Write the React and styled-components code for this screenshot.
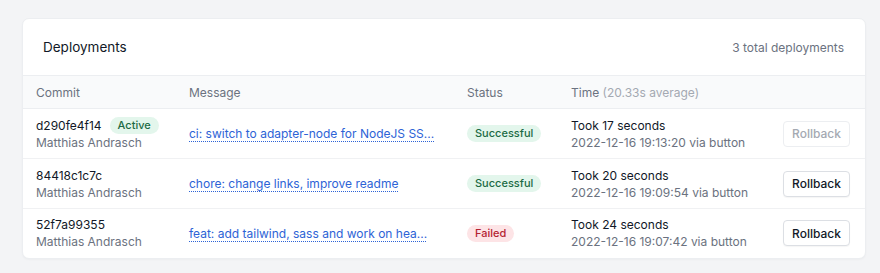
import styled, { createGlobalStyle } from 'styled-components';

const GlobalStyle = createGlobalStyle`
  html, body {
    margin: 0;
    padding: 0;
    background: #f3f4f6;
    font-family: Inter, "Noto Sans", sans-serif;
    -webkit-font-smoothing: antialiased;
  }
`;

const deployments = [
  {
    commit: 'd290fe4f14',
    author: 'Matthias Andrasch',
    active: true,
    message: 'ci: switch to adapter-node for NodeJS SS...',
    status: 'success',
    took: 17,
    date: '2022-12-16 19:13:20',
  },
  {
    commit: '84418c1c7c',
    author: 'Matthias Andrasch',
    message: 'chore: change links, improve readme',
    status: 'success',
    took: 20,
    date: '2022-12-16 19:09:54',
  },
  {
    commit: '52f7a99355',
    author: 'Matthias Andrasch',
    message: 'feat: add tailwind, sass and work on hea...',
    status: 'failed',
    took: 24,
    date: '2022-12-16 19:07:42',
  },
];

export default function App() {
  return (
    <>
      <GlobalStyle />
      <Page>
        <Card>
          <CardHeader>
            <Title>Deployments</Title>
            <Total>3 total deployments</Total>
          </CardHeader>
          <Table>
            <colgroup>
              <col style={{ width: 153 }} />
              <col style={{ width: 278 }} />
              <col style={{ width: 104 }} />
              <col />
              <col style={{ width: 100 }} />
            </colgroup>
            <thead>
              <tr>
                <Th>Commit</Th>
                <Th>Message</Th>
                <Th>Status</Th>
                <Th>
                  Time <Muted>(20.33s average)</Muted>
                </Th>
                <Th />
              </tr>
            </thead>
            <tbody>
              {deployments.map((d) => (
                <Row key={d.commit}>
                  <Td>
                    <Primary>
                      {d.commit}
                      {d.active && <Badge tone="green">Active</Badge>}
                    </Primary>
                    <Secondary>{d.author}</Secondary>
                  </Td>
                  <Td>
                    <MessageLink href="#">{d.message}</MessageLink>
                  </Td>
                  <Td>
                    {d.status === 'success' ? (
                      <Badge tone="green">Successful</Badge>
                    ) : (
                      <Badge tone="red">Failed</Badge>
                    )}
                  </Td>
                  <Td>
                    <Primary>Took {d.took} seconds</Primary>
                    <Secondary>{d.date} via button</Secondary>
                  </Td>
                  <ActionTd>
                    <RollbackButton disabled={d.active}>Rollback</RollbackButton>
                  </ActionTd>
                </Row>
              ))}
            </tbody>
          </Table>
        </Card>
      </Page>
    </>
  );
}

const Page = styled.div`
  padding: 18px 14px 15px 22px;
`;

const Card = styled.div`
  background: #fff;
  border: 1px solid #eceef1;
  border-radius: 7px;
  box-shadow: 0 1px 2px rgba(0, 0, 0, 0.03);
  overflow: hidden;
`;

const CardHeader = styled.div`
  display: flex;
  align-items: center;
  justify-content: space-between;
  height: 56px;
  padding: 0 21px 0 20px;
  border-bottom: 1px solid #eceef1;
`;

const Title = styled.div`
  font-size: 13.5px;
  color: #111827;
`;

const Total = styled.div`
  font-size: 12px;
  color: #6b7280;
`;

const Table = styled.table`
  width: 100%;
  border-collapse: collapse;
  table-layout: fixed;
`;

const Th = styled.th`
  height: 32px;
  padding: 0 0 0 13px;
  background: #f9fafb;
  border-bottom: 1px solid #eceef1;
  text-align: left;
  font-weight: 400;
  font-size: 12px;
  color: #6b7280;
`;

const Muted = styled.span`
  color: #a4a9b2;
`;

const Row = styled.tr`
  height: 50px;
  border-bottom: 1px solid #f0f1f3;

  &:last-child {
    border-bottom: none;
    height: 49px;
  }
`;

const Td = styled.td`
  padding: 0 0 0 13px;
  vertical-align: middle;
  font-size: 12px;
`;

const ActionTd = styled(Td)`
  padding: 0 15px 0 0;
  text-align: right;
`;

const Primary = styled.div`
  display: flex;
  align-items: center;
  gap: 8px;
  color: #111827;
  line-height: 17px;
`;

const Secondary = styled.div`
  color: #6b7280;
  line-height: 17px;
`;

const Badge = styled.span`
  display: inline-block;
  padding: 1px 8px;
  border-radius: 999px;
  font-size: 11px;
  font-weight: 500;
  line-height: 15px;
  background: ${({ tone }) => (tone === 'red' ? '#fde4e6' : '#e3f6ec')};
  color: ${({ tone }) => (tone === 'red' ? '#b42332' : '#1c6b44')};
`;

const MessageLink = styled.a`
  color: #2d63d6;
  text-decoration: underline dotted;
  text-underline-offset: 3px;
  text-decoration-thickness: 1px;
  white-space: nowrap;
`;

const RollbackButton = styled.button`
  font-family: inherit;
  font-size: 12px;
  font-weight: 500;
  height: 26px;
  padding: 0 8px;
  border-radius: 4px;
  background: #fff;
  border: 1px solid ${({ disabled }) => (disabled ? '#eceef1' : '#dcdfe4')};
  color: ${({ disabled }) => (disabled ? '#a4a9b2' : '#111827')};
  box-shadow: ${({ disabled }) => (disabled ? 'none' : '0 1px 1px rgba(0,0,0,0.04)')};
  cursor: ${({ disabled }) => (disabled ? 'default' : 'pointer')};
`;
